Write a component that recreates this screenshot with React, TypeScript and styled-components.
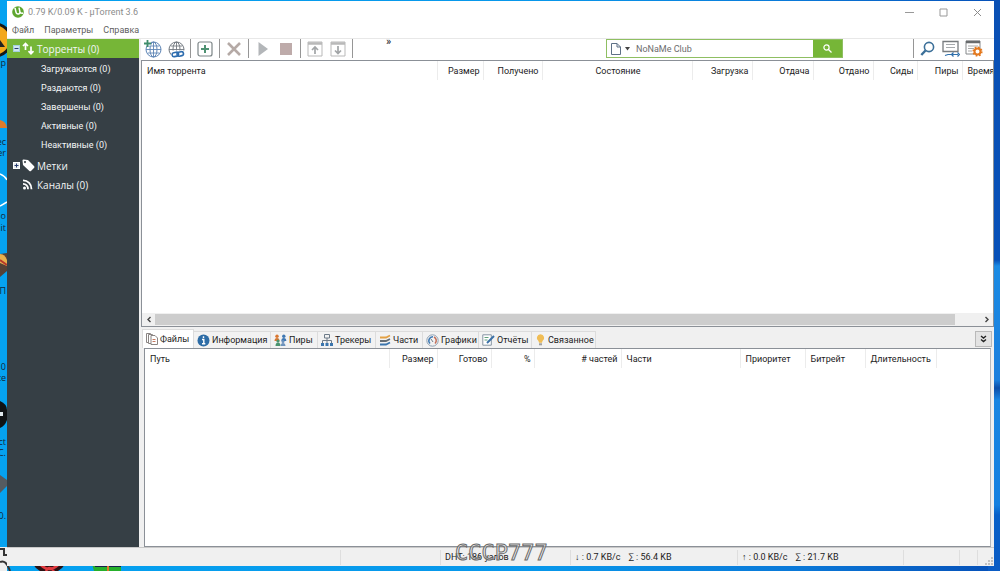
import React from "react";
import styled, { createGlobalStyle } from "styled-components";

const GlobalStyle = createGlobalStyle`
  *, *::before, *::after { box-sizing: border-box; }
  body {
    margin: 0;
    font-family: Roboto, "Noto Sans", sans-serif;
    font-size: 9px;
    line-height: 12px;
    color: #1c1c1c;
  }
  button, input { font: inherit; color: inherit; border: 0; padding: 0; background: none; margin: 0; }
  ul { list-style: none; margin: 0; padding: 0; }
  svg { display: block; flex: none; }
`;

const Desktop = styled.div`
  position: relative;
  display: flex;
  min-height: 100vh;
  padding: 1px 6px 5px 7px;
  overflow: hidden;
  background:
    linear-gradient(180deg, #0a50b4 0, #0750b8 260px, #1b8be4 266px, #1b7fdd 380px, #0c4ea9 388px, #1a86e2 400px, #1580e0 505px, #0860c8 515px, #0b5cc4 100%) right top / 12px 100% no-repeat,
    linear-gradient(90deg, #05a2f0 0, #0896ea 55%, #0a78d8 80%, #0650b8 100%);
`;

const Wallpaper = styled.svg`
  position: absolute;
  left: 0;
  bottom: 0;
`;

const Window = styled.div`
  position: relative;
  display: flex;
  flex-direction: column;
  flex: 1;
  min-width: 0;
  background: #f0f0f0;
`;

const TitleBar = styled.header`
  display: flex;
  align-items: center;
  height: 22px;
  padding-left: 5px;
  gap: 4px;
  background: #fff;
  color: #8c8c8c;
`;

const Title = styled.h1`
  flex: 1;
  margin: 0;
  font-size: 9px;
  font-weight: 400;
`;

const CaptionButton = styled.button`
  display: grid;
  place-items: center;
  width: 30px;
  height: 20px;
`;

const Captions = styled.div`
  display: flex;
  gap: 4px;
  padding-right: 2px;
`;

const MenuBar = styled.nav`
  display: flex;
  gap: 10px;
  height: 15px;
  padding-left: 5px;
  padding-bottom: 2px;
  background: #fff;
  color: #5f5f5f;
`;

const Body = styled.div`
  display: flex;
  flex: 1;
  min-height: 0;
  border-top: 1px solid #e8e8e8;
`;

const Sidebar = styled.aside`
  width: 132px;
  flex: none;
  background: #363f45;
  color: #f4f6f7;
`;

const Group = styled.button<{ $active?: boolean }>`
  display: flex;
  align-items: center;
  gap: 2px;
  width: 100%;
  height: 19px;
  padding-left: 6px;
  font-family: "Open Sans", "Noto Sans", sans-serif;
  font-size: 10px;
  background: ${(p) => (p.$active ? "#76b637" : "transparent")};
`;

const Expander = styled.span<{ $hidden?: boolean }>`
  visibility: ${(p) => (p.$hidden ? "hidden" : "visible")};
`;

const SubItem = styled.button`
  display: block;
  width: 100%;
  height: 19px;
  padding-left: 34px;
  text-align: left;
  font-size: 9px;
`;

const SubList = styled.ul`
  && { padding: 1px 0 2px; }
`;

const Main = styled.main`
  display: flex;
  flex-direction: column;
  flex: 1;
  min-width: 0;
  padding-left: 2px;
`;

const Toolbar = styled.div`
  display: flex;
  align-items: center;
  height: 21px;
  padding-right: 9px;
  padding-bottom: 2px;
  background: #fff;
`;

const ToolButton = styled.button`
  display: grid;
  place-items: center;
  width: 23px;
  height: 19px;
`;

const Divider = styled.span`
  width: 1px;
  height: 19px;
  margin: 0 2px 0 3px;
  background: #969696;
`;

const Overflow = styled.button`
  align-self: flex-start;
  margin-left: 31px;
  font-size: 11px;
  line-height: 6px;
`;

const Search = styled.form`
  display: flex;
  width: 237px;
  height: 19px;
  margin-left: auto;
  margin-right: 67px;
  border: 1px solid #8fbf62;
`;

const Engine = styled.button`
  display: flex;
  align-items: center;
  gap: 4px;
  padding: 0 6px 0 4px;
`;

const SearchInput = styled.input`
  flex: 1;
  min-width: 0;
  color: #6d6d6d;
  outline: 0;
`;

const SearchButton = styled.button`
  display: grid;
  place-items: center;
  width: 29px;
  background: #76b637;
`;

const TorrentPane = styled.section`
  display: flex;
  flex-direction: column;
  height: 267px;
  border: 1px solid #8b9097;
  background: #fff;
`;

const PaneSpace = styled.div`
  flex: 1;
  min-height: 0;
  overflow: hidden;
`;

const Table = styled.table`
  width: 100%;
  table-layout: fixed;
  border-collapse: collapse;
`;

const Th = styled.th<{ $align?: string; $last?: boolean }>`
  height: 19px;
  padding: 0 ${(p) => (p.$last ? 0 : 3)}px 0 5px;
  font-weight: 400;
  text-align: ${(p) => p.$align || "left"};
  border-right: ${(p) => (p.$last ? 0 : 1)}px solid #ececec;
  white-space: nowrap;
  overflow: hidden;
`;

const ScrollBar = styled.div`
  display: flex;
  height: 13px;
  background: #f0f0f0;
`;

const ScrollButton = styled.button`
  display: grid;
  place-items: center;
  width: 13px;
`;

const ScrollTrack = styled.div`
  flex: 1;
  padding: 1px 25px 1px 0;
`;

const ScrollThumb = styled.div`
  height: 100%;
  background: #cdcdcd;
`;

const Tabs = styled.div`
  display: flex;
  align-items: flex-end;
  height: 21px;
  padding: 2px 2px 0 1px;
`;

const Tab = styled.button<{ $active?: boolean; $width: number }>`
  display: flex;
  align-items: center;
  gap: 2px;
  flex: none;
  width: ${(p) => p.$width}px;
  height: ${(p) => (p.$active ? 19 : 17)}px;
  padding-left: 3px;
  white-space: nowrap;
  border: 1px solid #dcdcdc;
  border-left-width: ${(p) => (p.$active ? 1 : 0)}px;
  border-bottom: 0;
  background: ${(p) => (p.$active ? "#fff" : "#f2f2f2")};
`;

const Collapse = styled.button`
  display: grid;
  place-items: center;
  align-self: center;
  width: 17px;
  height: 16px;
  margin-left: auto;
  border: 1px solid #b9b9b9;
  background: #e3e3e3;
`;

const DetailPane = styled.section`
  flex: 1;
  min-height: 0;
  margin: 0 3px 0 3px;
  border: 1px solid #8b9097;
  border-right-color: #b5b8bc;
  background: #fff;
`;

const StatusBar = styled.footer`
  display: flex;
  align-items: center;
  height: 19px;
  border-top: 1px solid #c9c9c9;
`;

const Status = styled.div<{ $width?: number }>`
  display: flex;
  align-items: center;
  gap: 8px;
  flex: ${(p) => (p.$width ? "none" : "1")};
  width: ${(p) => (p.$width ? p.$width + "px" : "auto")};
  height: 15px;
  padding-left: 4px;
  white-space: nowrap;
  border-right: 1px solid #dedede;
`;

const Grip = styled.div`
  display: flex;
  justify-content: flex-end;
  align-self: flex-end;
  width: 16px;
  padding: 0 1px 1px 0;
`;

const Watermark = styled.div`
  position: absolute;
  left: 448px;
  bottom: 2px;
  font-family: "DejaVu Sans Mono", monospace;
  font-size: 22px;
  line-height: 22px;
  color: rgba(240, 240, 240, 0.6);
  -webkit-text-stroke: 1px #6a6a6a;
  pointer-events: none;
`;

const Arrows = () => (
  <svg width="13" height="13" viewBox="0 0 13 13" fill="none" stroke="#fff" strokeWidth="1.7">
    <path d="M3.5 8V1.8M1 4l2.500-2.500L6 4M9 4.500v7M6.500 9.200l2.500 2.500L11.500 9.200" />
  </svg>
);
const Tag = () => (
  <svg width="13" height="13" viewBox="0 0 13 13">
    <path fill="#fff" fillRule="evenodd" d="M.5 1.500Q.5.500 1.500.5L6 1 12.200 7.200Q12.700 8 12.200 8.700L9 12Q8.200 12.600 7.400 12L1 6ZM3 2a1 1 0 1 0 .01 0Z" />
  </svg>
);
const Rss = () => (
  <svg width="13" height="13" viewBox="0 0 13 13" fill="none" stroke="#fff" strokeWidth="1.800">
    <circle cx="2.500" cy="10" r="1.500" fill="#fff" stroke="none" />
    <path d="M1 5.800a5 5 0 0 1 5 5.400M1 2.300a8.500 8.500 0 0 1 8.500 8.900" />
  </svg>
);
const PlusMinus = ({ plus }: { plus?: boolean }) => (
  <svg width="7" height="7" viewBox="0 0 7 7">
    <rect x=".5" y=".5" width="6" height="6" fill={plus ? "#e8ecee" : "#cfe6ef"} stroke={plus ? "#fff" : "#a4d0dc"} />
    <path d={plus ? "M1.500 3.500h4M3.500 1.500v4" : "M1.500 3.500h4"} stroke="#263c70" />
  </svg>
);
const Logo = () => (
  <svg width="12" height="12" viewBox="0 0 12 12">
    <circle cx="6" cy="6" r="5.800" fill="#5fa62f" />
    <path d="M3 1.800l1 4.400q.5 2.200 2.600 1.700 1.700-.4 1.300-2.300L7 1.600M7.600 4.800q.6 3 3.400 2.200" fill="none" stroke="#fff" strokeWidth="1.500" />
  </svg>
);
const Globe = ({ stroke, children }: { stroke: string; children: React.ReactNode }) => (
  <svg width="18" height="18" viewBox="0 0 18 18" fill="none" stroke={stroke}>
    <circle cx="9.500" cy="9.500" r="7.500" />
    <ellipse cx="9.500" cy="9.500" rx="3.500" ry="7.500" />
    <path d="M2 9.500h15M9.500 2v15M3.500 6h12M3.500 13h12" strokeWidth=".9" />
    {children}
  </svg>
);
const AddUrl = () => (
  <Globe stroke="#5f86b6">
    <path d="M0 0h7v5.500H0z" fill="#fff" stroke="none" />
    <path d="M3.500 0v7M0 3.500h7" stroke="#3f8d6b" strokeWidth="1.800" />
  </Globe>
);
const LinkUrl = () => (
  <Globe stroke="#747b82">
    <path d="M4 10.500h14V18H4z" fill="#fff" stroke="none" />
    <rect x="5" y="12.500" width="6.500" height="4" rx="2" stroke="#2d6cae" strokeWidth="1.600" transform="rotate(-12 8 14)" />
    <rect x="10" y="12" width="6.500" height="4" rx="2" stroke="#2d6cae" strokeWidth="1.600" transform="rotate(-12 13 14)" />
  </Globe>
);
const AddTorrent = () => (
  <svg width="16" height="16" viewBox="0 0 16 16" fill="none">
    <rect x="1" y="1" width="14" height="14" rx="2" stroke="#7c8587" strokeWidth="1.200" />
    <path d="M8 4v8M4 8h8" stroke="#4f9273" strokeWidth="2" />
  </svg>
);
const Remove = () => (
  <svg width="14" height="14" viewBox="0 0 14 14"><path d="M1 1l12 12M13 1L1 13" stroke="#b5aaa6" strokeWidth="2.600" /></svg>
);
const Play = () => (
  <svg width="12" height="16" viewBox="0 0 12 16"><path d="M1.500 1v14L11 8z" fill="#b3b6b9" /></svg>
);
const Stop = () => (
  <svg width="12" height="12" viewBox="0 0 12 12"><path d="M0 0h12v12H0z" fill="#beabaa" /></svg>
);
const Queue = ({ down }: { down?: boolean }) => (
  <svg width="16" height="16" viewBox="0 0 16 16" fill="none" stroke="#b9b9b9">
    <path d="M1 1h14v14H1z" /><path d="M1 2.500h14" strokeWidth="2.500" />
    <path d={down ? "M8 5v8M5 9.500l3 3 3-3" : "M8 13V6M5 9l3-3 3 3"} stroke="#a2a5a7" strokeWidth="1.700" />
  </svg>
);
const Lens = () => (
  <svg width="15" height="16" viewBox="0 0 15 16" fill="none" stroke="#3c7099">
    <circle cx="9" cy="6" r="4.600" strokeWidth="1.600" /><path d="M5.500 9.500L1.300 14" strokeWidth="2.400" />
  </svg>
);
const Remote = () => (
  <svg width="18" height="17" viewBox="0 0 18 17" fill="none">
    <path d="M1 1.500h15v10H1z" stroke="#777b7e" strokeWidth="1.300" /><path d="M4 4.500h9M4 7.500h9" stroke="#a6aaad" />
    <path d="M3 15.500l3-1h3M10 14.500h6M11.500 12.500l-2 2 2 2M15.500 12.500l2 2-2 2" stroke="#2f70ac" strokeWidth="1.200" />
  </svg>
);
const Prefs = () => (
  <svg width="18" height="17" viewBox="0 0 18 17" fill="none">
    <path d="M1 1h14v13H1z" stroke="#85888a" /><path d="M1 2h14" stroke="#686b6d" strokeWidth="2.500" />
    <path d="M3 6h10M3 8.500h6M3 11h4" stroke="#a8a8a8" />
    <circle cx="12.500" cy="11.500" r="3" fill="#fff" stroke="#e4791f" strokeWidth="2" />
    <circle cx="12.500" cy="11.500" r="4.300" stroke="#e4791f" strokeWidth="1.600" strokeDasharray="1.700 1.670" />
  </svg>
);
const Page = () => (
  <svg width="10" height="12" viewBox="0 0 10 12"><path d="M.5.5H6L9.500 4v7.500h-9zM6 .5V4h3.500" fill="#fff" stroke="#5e7186" /></svg>
);
const Caret = () => <svg width="5" height="4" viewBox="0 0 5 4"><path d="M0 0h5L2.500 3.500z" fill="#444" /></svg>;
const SmallLens = () => (
  <svg width="9" height="9" viewBox="0 0 9 9" fill="none" stroke="#fff" strokeWidth="1.200"><circle cx="3.500" cy="3.500" r="2.600" /><path d="M5.500 5.500L8.500 8.500" /></svg>
);

const Files = () => (
  <svg width="12" height="12" viewBox="0 0 12 12" fill="#fff" stroke="#8a8583"><path d="M.5.500h4l1 1v8h-5z" /><path d="M2.500 1.500h4l1 1v8h-5z" /><path d="M5 2.500h4L11.500 5v6.500H5z" /><path d="M6.500 6.500h3M6.500 8.500h3" stroke="#c77a62" /></svg>
);
const Info = () => (
  <svg width="13" height="13" viewBox="0 0 13 13"><circle cx="6.500" cy="6.500" r="6" fill="#2d6ca6" /><path d="M6.500 2.300v1.800M5 5.500h1.800v4M5 9.800h3.300" fill="none" stroke="#fff" strokeWidth="1.400" /></svg>
);
const Peers = () => (
  <svg width="13" height="12" viewBox="0 0 13 12">
    <circle cx="3" cy="2.200" r="1.700" fill="#d9762f" /><path d="M.5 7q0-3 2.500-3t2.500 3z" fill="#d9762f" />
    <circle cx="9.800" cy="2.200" r="1.700" fill="#3f78b3" /><path d="M7.300 7q0-3 2.500-3t2.500 3z" fill="#3f78b3" />
    <circle cx="4" cy="7" r="1.600" fill="#4b9470" /><path d="M1.500 12q0-3.500 2.500-3.500t2.500 3.500z" fill="#4b9470" />
    <circle cx="9" cy="7.400" r="1.500" fill="#6e93bd" /><path d="M6.800 12q0-3 2.200-3t2.500 3z" fill="#6e93bd" />
  </svg>
);
const Trackers = () => (
  <svg width="12" height="12" viewBox="0 0 12 12" fill="none"><path d="M3.500.5h5v3.500h-5zM6 4v2.500M1.500 9V6.500h9V9M6 6.500V9" stroke="#6d7b88" /><path d="M0 9h3v3H0zM4.500 9h3v3h-3zM9 9h3v3H9z" fill="#3b75ad" /></svg>
);
const Pieces = () => (
  <svg width="12" height="12" viewBox="0 0 12 12" fill="none" strokeWidth="1.800"><path d="M1 3.500h6l4-2" stroke="#e3a145" /><path d="M1 7h6l4-2" stroke="#656d74" /><path d="M1 10.500h6l4-2" stroke="#3b75ad" /></svg>
);
const Graphs = () => (
  <svg width="13" height="13" viewBox="0 0 13 13" fill="none"><circle cx="6.500" cy="6.500" r="5.700" stroke="#8fa0b2" /><path d="M4 9.500a4 4 0 0 1 3-6.800" stroke="#3d78b2" strokeWidth="1.500" /><path d="M8 3a4 4 0 0 1 1 6.500" stroke="#c36c55" strokeWidth="1.500" /><path d="M5 5l2 3" stroke="#717d88" /></svg>
);
const Reports = () => (
  <svg width="13" height="12" viewBox="0 0 13 12" fill="none"><path d="M.8.800h8.500v10.400H.8z" fill="#fff" stroke="#8695a3" /><path d="M2.500 3.500h4M2.500 6h3" stroke="#62a07b" /><path d="M5 9l7-7" stroke="#3c71a7" strokeWidth="2" /></svg>
);
const Bulb = () => (
  <svg width="11" height="12" viewBox="0 0 11 12"><path d="M5.500.3a3.700 3.700 0 0 1 2 6.800l-.5 1.700H4l-.5-1.700a3.700 3.700 0 0 1 2-6.800z" fill="#f0bd55" /><path d="M4 9.300h3v2H4z" fill="#a0a0a0" /></svg>
);

const torrentColumns: [string, number, string?][] = [
  ["Имя торрента", 0], ["Размер", 46, "right"], ["Получено", 59, "right"], ["Состояние", 150, "center"],
  ["Загрузка", 60, "right"], ["Отдача", 61, "right"], ["Отдано", 60, "right"], ["Сиды", 44, "right"],
  ["Пиры", 45, "right"], ["Время", 31],
];
const fileColumns: [string, number, string?][] = [
  ["Путь", 244], ["Размер", 48, "right"], ["Готово", 54, "right"], ["%", 43, "right"], ["# частей", 87, "right"],
  ["Части", 119], ["Приоритет", 65], ["Битрейт", 60], ["Длительность", 71], ["", 0],
];
const tabs: [string, number, React.ReactNode][] = [
  ["Файлы", 52, <Files />], ["Информация", 77, <Info />], ["Пиры", 47, <Peers />], ["Трекеры", 58, <Trackers />],
  ["Части", 47, <Pieces />], ["Графики", 56, <Graphs />], ["Отчёты", 53, <Reports />], ["Связанное", 64, <Bulb />],
];

const HeaderTable = ({ columns, label }: { columns: [string, number, string?][]; label: string }) => (
  <Table aria-label={label}>
    <colgroup>{columns.map(([n, w]) => <col key={n} width={w || undefined} />)}</colgroup>
    <thead>
      <tr>{columns.map(([n, , a], i) => <Th key={n} scope="col" $align={a} $last={i === columns.length - 1}>{n}</Th>)}</tr>
    </thead>
  </Table>
);

export default function App() {
  return (
    <Desktop>
      <GlobalStyle />
      <Wallpaper width="140" height="571" viewBox="0 0 140 571" aria-hidden="true">
        <circle cx="-5" cy="40" r="16" fill="#f3a81b" stroke="#181818" strokeWidth="3" />
        <path d="M0 40l5 7H0z" fill="#222" />
        <path d="M0 120q6 1 7 8H0z" fill="#e07b28" />
        <path d="M0 174q5 2 7 6M0 206l7-4" stroke="#fff" strokeWidth="1.500" fill="none" />
        <path d="M0 254l7-1v18l-7 6z" fill="#554136" /><path d="M0 254q5 0 7 6v6l-7-3z" fill="#e8b04c" /><path d="M0 260l7 5" stroke="#b6372b" strokeWidth="2" />
        <path d="M0 401q7 3 7 9v10q-2 6-7 8z" fill="#101214" /><path d="M0 412h3v4H0z" fill="#dfe7ec" />
        <path d="M0 475l7 5v6l-7 7z" fill="#555b60" />
        <path d="M0 547h7v24H0z" fill="#eee" /><path d="M0 549h4v6h3M0 562q6-3 10 9" stroke="#333" strokeWidth="2" fill="none" />
        <path d="M33 564h32q-2 4-7 7H40q-5-3-7-7z" fill="#2b1214" /><path d="M41 565q8 8 17 0M46 571q3-6 8 0" stroke="#e23a3f" strokeWidth="2.500" fill="none" />
        <path d="M92 564h29v7H94z" fill="#26b02b" /><path d="M95 564h26v3H95z" fill="#17204a" /><path d="M108 566v5" stroke="#e2722a" strokeWidth="2" />
        <g fontSize="9" fontFamily="Open Sans" fill="#10283c" textAnchor="end">
          <text x="6" y="66">р</text><text x="6" y="145">ec</text><text x="6" y="156">er</text><text x="6" y="219">o</text><text x="6" y="231">.it</text>
          <text x="6" y="294">П</text><text x="6" y="370">10</text><text x="6" y="381">ce</text><text x="6" y="445">ct</text><text x="6" y="456">C.</text><text x="6" y="519">0.</text>
        </g>
      </Wallpaper>
      <Window>
        <TitleBar>
          <Logo />
          <Title>0.79 K/0.09 K - µTorrent 3.6</Title>
          <Captions>
            <CaptionButton aria-label="Свернуть"><svg width="9" height="9"><path d="M0 4.500h9" stroke="#999" /></svg></CaptionButton>
            <CaptionButton aria-label="Развернуть"><svg width="9" height="9"><path d="M1 1h7v7H1z" fill="none" stroke="#999" /></svg></CaptionButton>
            <CaptionButton aria-label="Закрыть"><svg width="9" height="9"><path d="M1 1l7 7M8 1L1 8" stroke="#8c8c8c" /></svg></CaptionButton>
          </Captions>
        </TitleBar>
        <MenuBar>
          <button>Файл</button><button>Параметры</button><button>Справка</button>
        </MenuBar>
        <Body>
          <Sidebar>
            <Group $active><Expander><PlusMinus /></Expander><Arrows />Торренты (0)</Group>
            <SubList>
              {["Загружаются (0)", "Раздаются (0)", "Завершены (0)", "Активные (0)", "Неактивные (0)"].map((t) => (
                <li key={t}><SubItem>{t}</SubItem></li>
              ))}
            </SubList>
            <Group><Expander><PlusMinus plus /></Expander><Tag />Метки</Group>
            <Group><Expander $hidden><PlusMinus /></Expander><Rss />Каналы (0)</Group>
          </Sidebar>
          <Main>
            <Toolbar>
              <ToolButton aria-label="Добавить по ссылке"><AddUrl /></ToolButton>
              <ToolButton aria-label="Ссылка"><LinkUrl /></ToolButton>
              <Divider />
              <ToolButton aria-label="Добавить торрент"><AddTorrent /></ToolButton>
              <Divider />
              <ToolButton aria-label="Удалить"><Remove /></ToolButton>
              <Divider />
              <ToolButton aria-label="Запустить"><Play /></ToolButton>
              <ToolButton aria-label="Остановить"><Stop /></ToolButton>
              <Divider />
              <ToolButton aria-label="Выше"><Queue /></ToolButton>
              <ToolButton aria-label="Ниже"><Queue down /></ToolButton>
              <Divider />
              <Overflow aria-label="Ещё">»</Overflow>
              <Search onSubmit={(e) => e.preventDefault()}>
                <Engine type="button" aria-label="Выбор поиска"><Page /><Caret /></Engine>
                <SearchInput aria-label="Поиск" defaultValue="NoNaMe Club" />
                <SearchButton aria-label="Искать"><SmallLens /></SearchButton>
              </Search>
              <Divider />
              <ToolButton aria-label="Найти"><Lens /></ToolButton>
              <ToolButton aria-label="Удалённый доступ"><Remote /></ToolButton>
              <ToolButton aria-label="Настройки"><Prefs /></ToolButton>
            </Toolbar>
            <TorrentPane>
              <PaneSpace><HeaderTable columns={torrentColumns} label="Торренты" /></PaneSpace>
              <ScrollBar>
                <ScrollButton aria-label="Влево"><svg width="6" height="7"><path d="M4.500 1L2 3.500 4.500 6" fill="none" stroke="#444" strokeWidth="1.400" /></svg></ScrollButton>
                <ScrollTrack><ScrollThumb /></ScrollTrack>
                <ScrollButton aria-label="Вправо"><svg width="6" height="7"><path d="M1.500 1L4 3.500 1.500 6" fill="none" stroke="#444" strokeWidth="1.400" /></svg></ScrollButton>
              </ScrollBar>
            </TorrentPane>
            <Tabs>
              {tabs.map(([name, width, icon], i) => <Tab key={name} $width={width} $active={i === 0}>{icon}{name}</Tab>)}
              <Collapse aria-label="Скрыть панель"><svg width="7" height="8"><path d="M1 1l2.500 2L6 1M1 4.500l2.500 2 2.500-2" fill="none" stroke="#222" strokeWidth="1.400" /></svg></Collapse>
            </Tabs>
            <DetailPane><HeaderTable columns={fileColumns} label="Файлы" /></DetailPane>
          </Main>
        </Body>
        <StatusBar>
          <Status />
          <Status $width={100} />
          <Status $width={130}>DHT: 186 узлов</Status>
          <Status $width={167}><span>↓ : 0.7 KB/c</span><span>∑ : 56.4 KB</span></Status>
          <Status $width={166}><span>↑ : 0.0 KB/c</span><span>∑ : 21.7 KB</span></Status>
          <Status $width={56} />
          <Status $width={18} />
          <Grip><svg width="8" height="8"><path d="M6 0h2v2H6zM3 3h2v2H3zM6 3h2v2H6zM0 6h2v2H0zM3 6h2v2H3zM6 6h2v2H6z" fill="#c2c2c2" /></svg></Grip>
        </StatusBar>
        <Watermark>СССР777</Watermark>
      </Window>
    </Desktop>
  );
}
